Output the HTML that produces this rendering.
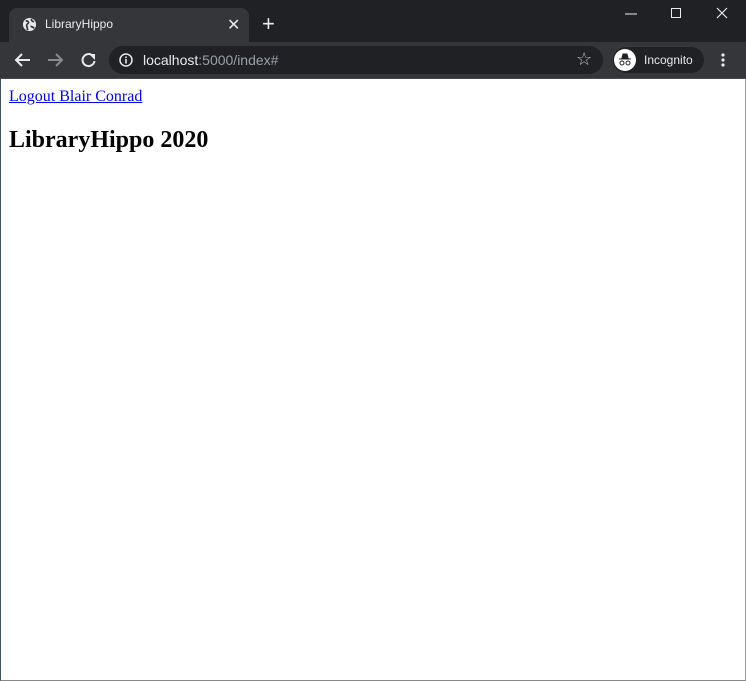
<!DOCTYPE html>
<html><head><style>
*{margin:0;padding:0;box-sizing:border-box}
body{width:746px;height:681px;overflow:hidden;background:#fff;position:relative;font-family:"Liberation Sans",sans-serif}
.top{position:absolute;left:0;top:0;width:746px;height:42px;background:#202124}
.tab{position:absolute;left:9px;top:8px;width:240px;height:34px;background:#35363a;border-radius:8px 8px 0 0}
.bar{position:absolute;left:0;top:42px;width:746px;height:37px;background:#35363a;border-bottom:1px solid #4a4a4e}
.omni{position:absolute;left:109px;top:46px;width:494px;height:28px;background:#202124;border-radius:14px}
.inc{position:absolute;left:613px;top:47px;width:91px;height:26px;background:#202124;border-radius:13px}
.t{position:absolute;color:#e8eaed;font-size:13px}
.content{position:absolute;left:0;top:79px;width:746px;height:602px;border-left:1px solid #3b5560;border-right:1px solid #999;border-bottom:1px solid #888}
a{position:absolute;left:8px;top:9px;font-family:"Liberation Serif",serif;font-size:16px;color:#00e;text-decoration:underline}
h2{position:absolute;left:8px;top:48px;font-family:"Liberation Serif",serif;font-size:24px;font-weight:bold;color:#000}
</style></head><body>
<div class="top"></div>
<div class="tab"></div>
<svg style="position:absolute;left:22px;top:17px" width="15" height="15" viewBox="0 0 16 16"><circle cx="8" cy="8" r="7" fill="#e8eaed"/><path d="M4 4c2 0 3 1 3 2s-2 1-2 3 1 3 1 5M10 2c0 2 1 3 3 3M9 10c1 0 3 1 4 2" stroke="#35363a" stroke-width="1.8" fill="none"/></svg>
<div class="t" style="left:45px;top:17px;font-size:12px">LibraryHippo</div>
<div class="t" style="left:227px;top:15px;font-size:16px">✕</div>
<div class="t" style="left:262px;top:11px;font-size:22px;font-weight:300">+</div>
<svg style="position:absolute;left:620px;top:5px" width="120" height="20"><path d="M5 9h12" stroke="#e8eaed" stroke-width="1"/><rect x="51.5" y="3.5" width="9" height="9" stroke="#e8eaed" fill="none"/><path d="M97 3l10 10M107 3l-10 10" stroke="#e8eaed" stroke-width="1.2"/></svg>
<div class="bar"></div>
<svg style="position:absolute;left:12px;top:50px" width="90" height="20" viewBox="0 0 90 20"><path d="M18 10H5M10 4l-6 6 6 6" stroke="#e8eaed" stroke-width="2" fill="none"/><path d="M36 10h13M44 4l6 6-6 6" stroke="#8a8b8e" stroke-width="2" fill="none"/><path d="M81 6a6 6 0 1 0 1.5 5" stroke="#e8eaed" stroke-width="2" fill="none"/><path d="M77 4h6v6z" fill="#e8eaed"/></svg>
<div class="omni"></div>
<svg style="position:absolute;left:119px;top:53px" width="14" height="14"><circle cx="7" cy="7" r="6" stroke="#e8eaed" stroke-width="1.5" fill="none"/><rect x="6.2" y="6" width="1.6" height="4.5" fill="#e8eaed"/><rect x="6.2" y="3.5" width="1.6" height="1.6" fill="#e8eaed"/></svg>
<div class="t" style="left:143px;top:52px;font-size:14px">localhost<span style="color:#9aa0a6">:5000/index#</span></div>
<div class="t" style="left:576px;top:49px;font-size:18px;color:#c0c0c0">☆</div>
<div class="inc"></div>
<svg style="position:absolute;left:614px;top:49px" width="22" height="22"><circle cx="11" cy="11" r="11" fill="#fff"/><path d="M5 10h12M8 9l1-4h4l1 4z" fill="#202124" stroke="#202124"/><circle cx="8" cy="14" r="2" stroke="#202124" fill="none"/><circle cx="14" cy="14" r="2" stroke="#202124" fill="none"/></svg>
<div class="t" style="left:644px;top:53px;font-size:12px">Incognito</div>
<svg style="position:absolute;left:720px;top:52px" width="6" height="16"><circle cx="3" cy="3" r="1.6" fill="#e8eaed"/><circle cx="3" cy="8" r="1.6" fill="#e8eaed"/><circle cx="3" cy="13" r="1.6" fill="#e8eaed"/></svg>
<div class="content">
<a href="#">Logout Blair Conrad</a>
<h2>LibraryHippo 2020</h2>
</div>
</body></html>
